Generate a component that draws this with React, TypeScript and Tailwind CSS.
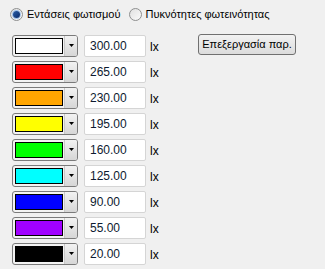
import React from 'react';

const levels = [
  { color: '#ffffff', value: '300.00' },
  { color: '#ff0000', value: '265.00' },
  { color: '#ffa500', value: '230.00' },
  { color: '#ffff00', value: '195.00' },
  { color: '#00ff00', value: '160.00' },
  { color: '#00ffff', value: '125.00' },
  { color: '#0000ff', value: '90.00' },
  { color: '#a000ff', value: '55.00' },
  { color: '#000000', value: '20.00' },
];

function Radio({ checked, label }: { checked?: boolean; label: string }) {
  return (
    <label className="flex items-center gap-[4px]">
      <span className="relative flex h-[13px] w-[13px] items-center justify-center rounded-full border border-[#8e8f8f] bg-gradient-to-br from-[#e0e0e0] to-[#fbfbfb]">
        {checked && (
          <span className="h-[7px] w-[7px] rounded-full bg-gradient-to-br from-[#2a5fa8] to-[#0a2a6a] ring-1 ring-[#9ec0ea]"></span>
        )}
      </span>
      <span>{label}</span>
    </label>
  );
}

function ColorCombo({ color }: { color: string }) {
  return (
    <div className="flex h-[22px] w-[66px] items-stretch rounded-[3px] border border-[#7a7a7a] bg-[#f3f3f3]">
      <div className="flex flex-1 items-center pl-[2px]">
        <div className="h-[16px] w-[48px] border border-black" style={{ background: color }}></div>
      </div>
      <div className="flex w-[13px] items-center justify-center rounded-r-[2px] border-l border-[#c8c8c8] bg-gradient-to-b from-[#f2f2f2] to-[#d6d6d6]">
        <svg width="5" height="3" viewBox="0 0 5 3">
          <path d="M0 0h5L2.5 3z" fill="#000" />
        </svg>
      </div>
    </div>
  );
}

export default function App() {
  return (
    <div
      className="h-[269px] w-[325px] bg-[#f0f0f0] text-[11px] text-black"
      style={{ fontFamily: '"Liberation Sans", Arial, sans-serif' }}
    >
      <div className="flex items-center gap-[8px] pl-[10px] pt-[6px]">
        <Radio checked label="Εντάσεις φωτισμού" />
        <Radio label="Πυκνότητες φωτεινότητας" />
      </div>

      <div className="mt-[12px] flex flex-col gap-[4px] pl-[12px]">
        {levels.map((l, i) => (
          <div key={i} className="flex h-[22px] items-center">
            <ColorCombo color={l.color} />
            <div className="ml-[6px] flex h-[22px] w-[62px] items-center rounded-[2px] border border-[#d5d5d5] bg-white pl-[5px] pt-[1px] text-[12px] text-[#0d1a30]">
              {l.value}
            </div>
            <span className="ml-[4px] w-[48px] pt-[3px] text-[12px]">lx</span>
            {i === 0 && (
              <button className="-mt-[2px] flex h-[21px] w-[98px] items-center justify-center whitespace-nowrap rounded-[3px] border border-[#707070] bg-gradient-to-b from-[#f2f2f2] to-[#dcdcdc] text-[11px]">
                Επεξεργασία παρ.
              </button>
            )}
          </div>
        ))}
      </div>
    </div>
  );
}
